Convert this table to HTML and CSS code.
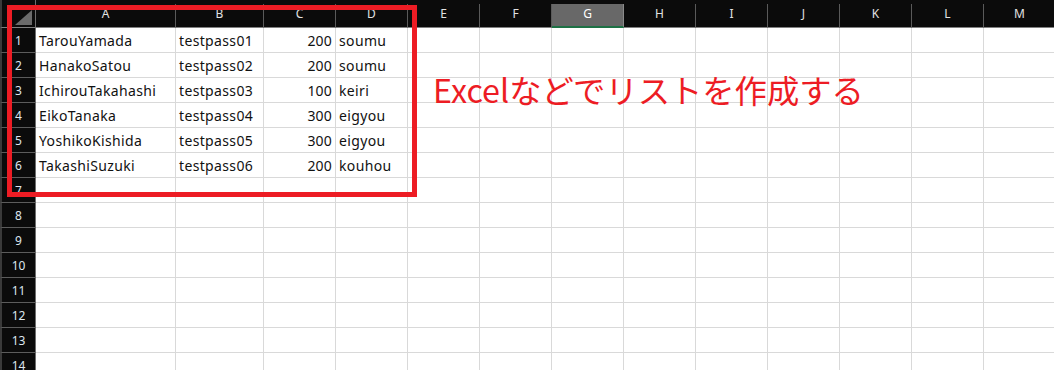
FILE: index.html
```html
<!DOCTYPE html>
<html lang="ja">
<head>
<meta charset="utf-8">
<link rel="stylesheet" href="styles.css">
</head>
<body>
<div class="sheet">
  <div class="grid">
    <div class="corner"><span class="tri"></span></div>
    <div class="ch">A</div><div class="ch">B</div><div class="ch">C</div><div class="ch">D</div><div class="ch">E</div><div class="ch">F</div><div class="ch sel">G</div><div class="ch">H</div><div class="ch">I</div><div class="ch">J</div><div class="ch">K</div><div class="ch">L</div><div class="ch">M</div>

    <div class="rh">1</div><div class="c">TarouYamada</div><div class="c">testpass01</div><div class="c num">200</div><div class="c">soumu</div><div class="c"></div><div class="c"></div><div class="c"></div><div class="c"></div><div class="c"></div><div class="c"></div><div class="c"></div><div class="c"></div><div class="c"></div>
    <div class="rh">2</div><div class="c">HanakoSatou</div><div class="c">testpass02</div><div class="c num">200</div><div class="c">soumu</div><div class="c"></div><div class="c"></div><div class="c"></div><div class="c"></div><div class="c"></div><div class="c"></div><div class="c"></div><div class="c"></div><div class="c"></div>
    <div class="rh">3</div><div class="c">IchirouTakahashi</div><div class="c">testpass03</div><div class="c num">100</div><div class="c">keiri</div><div class="c"></div><div class="c"></div><div class="c"></div><div class="c"></div><div class="c"></div><div class="c"></div><div class="c"></div><div class="c"></div><div class="c"></div>
    <div class="rh">4</div><div class="c">EikoTanaka</div><div class="c">testpass04</div><div class="c num">300</div><div class="c">eigyou</div><div class="c"></div><div class="c"></div><div class="c"></div><div class="c"></div><div class="c"></div><div class="c"></div><div class="c"></div><div class="c"></div><div class="c"></div>
    <div class="rh">5</div><div class="c">YoshikoKishida</div><div class="c">testpass05</div><div class="c num">300</div><div class="c">eigyou</div><div class="c"></div><div class="c"></div><div class="c"></div><div class="c"></div><div class="c"></div><div class="c"></div><div class="c"></div><div class="c"></div><div class="c"></div>
    <div class="rh">6</div><div class="c">TakashiSuzuki</div><div class="c">testpass06</div><div class="c num">200</div><div class="c">kouhou</div><div class="c"></div><div class="c"></div><div class="c"></div><div class="c"></div><div class="c"></div><div class="c"></div><div class="c"></div><div class="c"></div><div class="c"></div>
    <div class="rh">7</div><div class="c"></div><div class="c"></div><div class="c"></div><div class="c"></div><div class="c"></div><div class="c"></div><div class="c"></div><div class="c"></div><div class="c"></div><div class="c"></div><div class="c"></div><div class="c"></div><div class="c"></div>
    <div class="rh">8</div><div class="c"></div><div class="c"></div><div class="c"></div><div class="c"></div><div class="c"></div><div class="c"></div><div class="c"></div><div class="c"></div><div class="c"></div><div class="c"></div><div class="c"></div><div class="c"></div><div class="c"></div>
    <div class="rh">9</div><div class="c"></div><div class="c"></div><div class="c"></div><div class="c"></div><div class="c"></div><div class="c"></div><div class="c"></div><div class="c"></div><div class="c"></div><div class="c"></div><div class="c"></div><div class="c"></div><div class="c"></div>
    <div class="rh">10</div><div class="c"></div><div class="c"></div><div class="c"></div><div class="c"></div><div class="c"></div><div class="c"></div><div class="c"></div><div class="c"></div><div class="c"></div><div class="c"></div><div class="c"></div><div class="c"></div><div class="c"></div>
    <div class="rh">11</div><div class="c"></div><div class="c"></div><div class="c"></div><div class="c"></div><div class="c"></div><div class="c"></div><div class="c"></div><div class="c"></div><div class="c"></div><div class="c"></div><div class="c"></div><div class="c"></div><div class="c"></div>
    <div class="rh">12</div><div class="c"></div><div class="c"></div><div class="c"></div><div class="c"></div><div class="c"></div><div class="c"></div><div class="c"></div><div class="c"></div><div class="c"></div><div class="c"></div><div class="c"></div><div class="c"></div><div class="c"></div>
    <div class="rh">13</div><div class="c"></div><div class="c"></div><div class="c"></div><div class="c"></div><div class="c"></div><div class="c"></div><div class="c"></div><div class="c"></div><div class="c"></div><div class="c"></div><div class="c"></div><div class="c"></div><div class="c"></div>
    <div class="rh">14</div><div class="c"></div><div class="c"></div><div class="c"></div><div class="c"></div><div class="c"></div><div class="c"></div><div class="c"></div><div class="c"></div><div class="c"></div><div class="c"></div><div class="c"></div><div class="c"></div><div class="c"></div>
  </div>
  <div class="highlight"></div>
  <div class="note">Excelなどでリストを作成する</div>
</div>
</body>
</html>
```

FILE: styles.css
```css
html, body {
  margin: 0;
  padding: 0;
  background: #0b0b0b;
  overflow: hidden;
}
.sheet {
  position: relative;
  width: 1054px;
  height: 370px;
  overflow: hidden;
  background: #0b0b0b;
}
.grid {
  display: grid;
  grid-template-columns: 36px 140px 88px 72px 72px repeat(9, 72px);
  grid-template-rows: 28px repeat(14, 25px);
  width: 1056px;
  font-family: "Noto Sans", "Noto Sans CJK JP", sans-serif;
}
.corner {
  position: relative;
  background: #0b0b0b;
  border-left: 2px solid #3a3a3a;
  border-right: 1px solid #6e6e6e;
  border-bottom: 1px solid #808080;
  box-sizing: border-box;
}
.tri {
  position: absolute;
  left: 13px;
  top: 10px;
  width: 0;
  height: 0;
  border-style: solid;
  border-width: 0 0 15px 17px;
  border-color: transparent transparent #6b6b6b transparent;
}
.ch {
  margin-top: 4px;
  background: #0b0b0b;
  color: #e2e2e2;
  font-size: 12px;
  display: flex;
  align-items: center;
  justify-content: center;
  border-right: 1px solid #5a5a5a;
  border-bottom: 1px solid #808080;
  box-sizing: border-box;
  padding-bottom: 4px;
}
.ch.sel {
  background: #686868;
  border-bottom: 2px solid #1e7145;
  border-right-color: #8a8a8a;
  color: #ffffff;
  padding-bottom: 3px;
}
.rh {
  background: #0b0b0b;
  color: #dde6ef;
  font-size: 12px;
  display: flex;
  align-items: center;
  justify-content: center;
  border-left: 2px solid #3a3a3a;
  border-right: 1px solid #6e6e6e;
  border-bottom: 1px solid #5c5c5c;
  box-sizing: border-box;
  padding-top: 1px;
}
.c {
  background: #ffffff;
  color: #111111;
  font-size: 14px;
  letter-spacing: 0.35px;
  display: flex;
  align-items: center;
  padding: 0 3px 0 3px;
  border-right: 1px solid #d9d9d9;
  border-bottom: 1px solid #d9d9d9;
  box-sizing: border-box;
  white-space: nowrap;
}
.c.num {
  justify-content: flex-end;
  letter-spacing: 0.2px;
}
.highlight {
  position: absolute;
  left: 7px;
  top: 5px;
  width: 410px;
  height: 192px;
  border: 5px solid #ed1c24;
  box-sizing: border-box;
}
.note {
  position: absolute;
  left: 433px;
  top: 69px;
  color: #ed1c24;
  font-family: "Noto Sans CJK JP", "Noto Sans", sans-serif;
  font-size: 32.3px;
  line-height: 40px;
  white-space: nowrap;
}
```
